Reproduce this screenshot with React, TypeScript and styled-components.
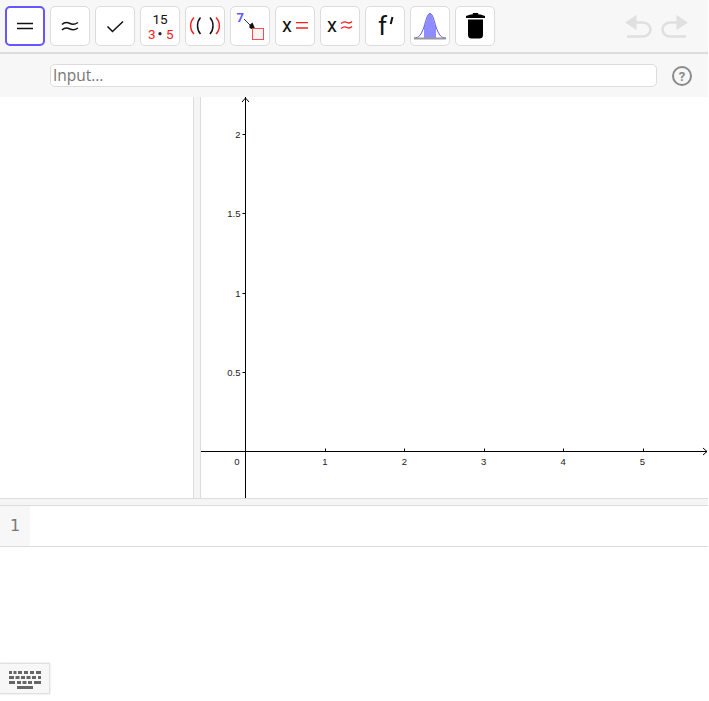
import React from "react";
import styled, { createGlobalStyle } from "styled-components";

const Global = createGlobalStyle`
  html, body { margin: 0; padding: 0; background: #fff; overflow: hidden; }
  body { font-family: Roboto, "Liberation Sans", sans-serif; }
`;

const Page = styled.div`
  position: relative;
  width: 709px;
  height: 701px;
  display: flex;
  flex-direction: column;
  background: #fff;
`;

const Toolbar = styled.div`
  height: 52px;
  box-sizing: border-box;
  padding: 6px 0 0 5px;
  display: flex;
  gap: 5px;
  background: #f7f7f7;
  width: 708px;
`;

const ToolButton = styled.button<{ $active?: boolean }>`
  width: 40px;
  height: 40px;
  padding: 0;
  box-sizing: border-box;
  background: #fff;
  border: ${(p) => (p.$active ? "2px solid #6557ff" : "1px solid #dcdcdc")};
  border-radius: 5px;
  display: flex;
  align-items: center;
  justify-content: center;
  svg { display: block; flex: none; }
  text { font-family: Roboto, "Liberation Sans", sans-serif; }
`;

const History = styled.div`
  margin-left: auto;
  display: flex;
  gap: 9px;
  padding: 9px 20px 0 0;
  align-items: flex-start;
`;

const HistoryIcon = styled.svg<{ $flip?: boolean }>`
  transform: ${(p) => (p.$flip ? "scaleX(-1)" : "none")};
`;

const InputRow = styled.div`
  width: 708px;
  height: 45px;
  box-sizing: border-box;
  border-top: 2px solid #dcdcdc;
  background: #f7f7f7;
  display: flex;
  align-items: center;
  padding: 0 16px 0 50px;
  gap: 15px;
`;

const InputBox = styled.div`
  flex: 1;
  height: 23px;
  box-sizing: border-box;
  background: #fff;
  border: 1px solid #dcdcdc;
  border-radius: 5px;
  padding-left: 2px;
  font-family: "Open Sans", Roboto, sans-serif;
  font-size: 15.5px;
  line-height: 20px;
  color: #777;
`;

const HelpIcon = styled.svg`
  flex: none;
  text {
    font-family: Roboto, "Liberation Sans", sans-serif;
    font-size: 13px;
    font-weight: 700;
    fill: #8a8a8a;
  }
`;

const Panels = styled.div`
  display: flex;
  height: 401px;
  width: 708px;
`;

const LeftPanel = styled.div`
  width: 193px;
  background: #fff;
`;

const VDivider = styled.div`
  width: 6px;
  background: #f5f5f5;
  border-left: 1px solid #dcdcdc;
  border-right: 1px solid #dcdcdc;
`;

const Graph = styled.div`
  flex: 1;
  svg { display: block; }
`;

const HDivider = styled.div`
  width: 708px;
  height: 8px;
  box-sizing: border-box;
  background: #f5f5f5;
  border-top: 1px solid #dcdcdc;
  border-bottom: 1px solid #dcdcdc;
`;

const SheetRow = styled.div`
  width: 708px;
  height: 41px;
  box-sizing: border-box;
  display: flex;
  border-bottom: 1px solid #dcdcdc;
`;

const RowNumber = styled.div`
  width: 30px;
  background: #f7f7f7;
  display: flex;
  align-items: center;
  justify-content: center;
  color: #777;
  font-family: "DejaVu Sans", sans-serif;
  font-size: 16px;
  padding-bottom: 2px;
  box-sizing: border-box;
`;

const KeyboardButton = styled.button`
  position: absolute;
  left: 0;
  top: 663px;
  width: 50px;
  height: 31px;
  padding: 3px 0 0 0;
  box-sizing: border-box;
  background: #f7f7f7;
  border: 1px solid #e0e0e0;
  border-left: 0;
  box-shadow: 0 0 2px rgba(0, 0, 0, 0.15);
  display: flex;
  align-items: center;
  justify-content: center;
`;

const Icons: React.ReactNode[] = [
  <svg width="24" height="24" key="eq" viewBox="0 0 24 24">
    <path d="M4 9.500h16M4 14.500h16" stroke="#111" strokeWidth="1.700" />
  </svg>,
  <svg width="24" height="24" key="ap" viewBox="0 0 24 24">
    <path d="M4 10.500c2.500-2.500 5-2.500 8-1s5 1 8-1M4 16c2.500-2.500 5-2.500 8-1s5 1 8-1" stroke="#111" strokeWidth="1.500" fill="none" />
  </svg>,
  <svg width="24" height="24" key="ck" viewBox="0 0 24 24">
    <path d="M4.500 12.500l5 5L20 7.500" stroke="#111" strokeWidth="1.500" fill="none" />
  </svg>,
  <svg width="38" height="38" key="fr" viewBox="0 0 38 38">
    <text x="19" y="16.500" fontSize="13.500" textAnchor="middle" fill="#111">15</text>
    <text x="7" y="31.500" fontSize="13.500" fill="#f52020">3</text>
    <circle cx="19" cy="26.700" r="1.600" fill="#222" />
    <text x="25" y="31.500" fontSize="13.500" fill="#f52020">5</text>
  </svg>,
  <svg width="38" height="38" key="pa" viewBox="0 0 38 38">
    <path d="M8 10.500c-4.500 4.500-4.500 12 0 16.500M30 10.500c4.500 4.500 4.500 12 0 16.500" stroke="#f52020" strokeWidth="1.500" fill="none" />
    <path d="M14.500 10.500c-4 4.500-4 12 0 16.500M24 10.500c4 4.500 4 12 0 16.500" stroke="#111" strokeWidth="1.500" fill="none" />
  </svg>,
  <svg width="38" height="38" key="su" viewBox="0 0 38 38">
    <text x="5.500" y="15" fontSize="13" fontWeight="700" fill="#6557ff">7</text>
    <path d="M13 12l11 11" stroke="#333" strokeWidth="1" />
    <path d="M18.500 18l3-2.500 3.500 8.500-6.500-3z" fill="#111" />
    <rect x="21.500" y="21.500" width="11" height="11" fill="#fff3f3" stroke="#f05050" strokeWidth="1" />
  </svg>,
  <svg width="38" height="38" key="xe" viewBox="0 0 38 38">
    <text x="6" y="25" fontSize="20" fill="#111">x</text>
    <path d="M20 15.700h12M20 21h12" stroke="#f52020" strokeWidth="1.300" />
  </svg>,
  <svg width="38" height="38" key="xa" viewBox="0 0 38 38">
    <text x="6" y="25" fontSize="20" fill="#111">x</text>
    <path d="M20 16.500c2.500-2 4-2 6-1s3 1 5-1M20 21.500c2.500-2 4-2 6-1s3 1 5-1" stroke="#f52020" strokeWidth="1.300" fill="none" />
  </svg>,
  <svg width="38" height="38" key="fp" viewBox="0 0 38 38">
    <text x="12" y="28" fontSize="26" fill="#111">f</text>
    <path d="M26.500 10l-1.800 7" stroke="#111" strokeWidth="2" />
  </svg>,
  <svg width="38" height="38" key="no" viewBox="0 0 38 38">
    <path d="M13 31V20.500c2-3 3.500-14 6-14s4 11 6 14V31z" fill="#8f8cff" />
    <path d="M3 31c5 0 7-3 10-11 2-7 3.500-13.500 6-13.500s4 6.500 6 13.500c3 8 5 11 10 11" fill="none" stroke="#5a55e8" strokeWidth="1" />
    <path d="M3 31.500h32" stroke="#999" strokeWidth="2" />
  </svg>,
  <svg width="38" height="38" key="tr" viewBox="0 0 38 38">
    <path d="M10 9l4.500-1.500h2L17 6h5l.5 1.500h2L29 9v2H10z" fill="#000" />
    <path d="M12 12.500h15V28c0 2.500-1.500 3.500-3.500 3.500h-8c-2 0-3.500-1-3.500-3.500z" fill="#000" />
  </svg>,
];

const UndoIcon = ({ flip }: { flip?: boolean }) => (
  <HistoryIcon $flip={flip} width="27" height="24" viewBox="0 0 27 24">
    <path d="M11.500 0L0 7.500 11.500 15z" fill="#e0e0e0" />
    <path d="M10 7.500h8c4 0 7.500 3 7.500 7s-3.500 7-7.500 7H2" fill="none" stroke="#e0e0e0" strokeWidth="2.600" />
  </HistoryIcon>
);

const GRAPH_W = 507;
const GRAPH_H = 401;
const X0 = 44.5;
const Y0 = 354.5;
const UNIT_X = 79.4;
const UNIT_Y = 158.5;

const Label = styled.text`
  font-family: "Liberation Sans", Arial, sans-serif;
  font-size: 9.5px;
  fill: #222;
`;

const GraphView = () => (
  <svg width={GRAPH_W} height={GRAPH_H} viewBox={`0 0 ${GRAPH_W} ${GRAPH_H}`}>
    <g stroke="#000" strokeWidth="1" fill="none">
      <path d={`M${X0} 0V${GRAPH_H}M0 ${Y0}H${GRAPH_W - 1}`} />
      <path d={`M${X0 - 3.5} 5L${X0} 1L${X0 + 3.5} 5`} />
      <path d={`M${GRAPH_W - 5} ${Y0 - 3.5}L${GRAPH_W - 1} ${Y0}L${GRAPH_W - 5} ${Y0 + 3.5}`} />
      {[1, 2, 3, 4, 5].map((n) => {
        const x = Math.round(X0 + n * UNIT_X) + 0.5;
        return <path key={n} d={`M${x} ${Y0 - 3}V${Y0}`} />;
      })}
      {[0.5, 1, 1.5, 2].map((n) => {
        const y = Math.floor(Y0 - n * UNIT_Y) + 0.5;
        return <path key={n} d={`M${X0 - 3} ${y}H${X0}`} />;
      })}
    </g>
    {[1, 2, 3, 4, 5].map((n) => (
      <Label key={n} x={X0 + n * UNIT_X} y={Y0 + 13} textAnchor="middle">{n}</Label>
    ))}
    {[0.5, 1, 1.5, 2].map((n) => (
      <Label key={n} x={X0 - 5} y={Math.floor(Y0 - n * UNIT_Y) + 4} textAnchor="end">{n}</Label>
    ))}
    <Label x={X0 - 6} y={Y0 + 13.5} textAnchor="end">0</Label>
  </svg>
);

export default function App() {
  return (
    <Page>
      <Global />
      <Toolbar>
        {Icons.map((icon, i) => (
          <ToolButton key={i} $active={i === 0}>{icon}</ToolButton>
        ))}
        <History>
          <UndoIcon />
          <UndoIcon flip />
        </History>
      </Toolbar>
      <InputRow>
        <InputBox>Input…</InputBox>
        <HelpIcon width="20" height="20" viewBox="0 0 20 20">
          <circle cx="10" cy="10" r="9" fill="none" stroke="#8a8a8a" strokeWidth="2" />
          <text x="10" y="14.500" textAnchor="middle">?</text>
        </HelpIcon>
      </InputRow>
      <Panels>
        <LeftPanel />
        <VDivider />
        <Graph><GraphView /></Graph>
      </Panels>
      <HDivider />
      <SheetRow>
        <RowNumber>1</RowNumber>
      </SheetRow>
      <KeyboardButton>
        <svg width="32" height="18" viewBox="0 0 32 18">
          <g fill="#666">
            <path d="M0 0h3v3H0zM4.500 0h3v3h-3zM9 0h4v3H9zM15 0h4v3h-4zM21 0h4v3h-4zM27 0h5v3h-5z" />
            <path d="M0 5h5v3H0zM6.500 5h4v3h-4zM12 5h4v3h-4zM17.500 5h4v3h-4zM23 5h4v3h-4zM29 5h3v3h-3z" />
            <path d="M0 10h6v3H0zM8 10h4v3H8zM13.500 10h4v3h-4zM19 10h4v3h-4zM25 10h7v3h-7z" />
            <path d="M8 15h16v3H8z" />
          </g>
        </svg>
      </KeyboardButton>
    </Page>
  );
}
